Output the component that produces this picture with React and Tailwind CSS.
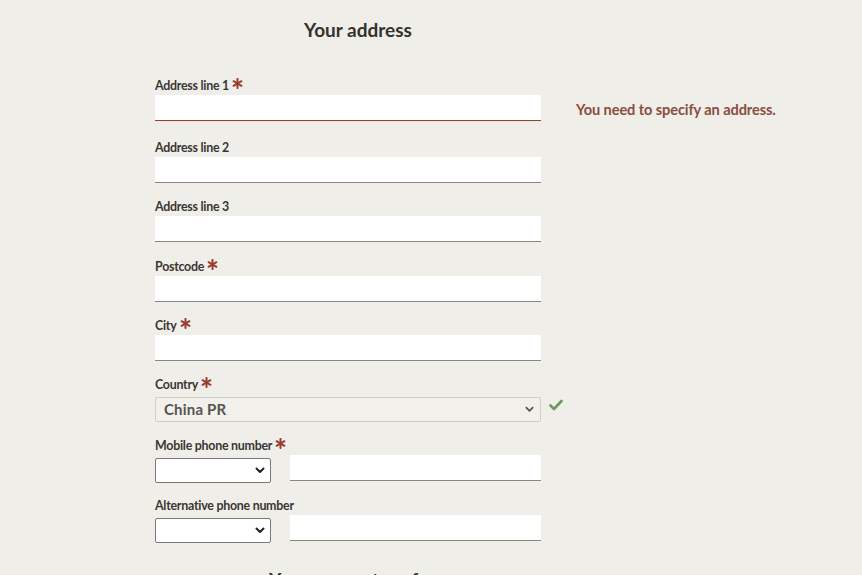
import React from "react";

const Star = () => (
  <svg width="11" height="11" viewBox="0 0 12 12" className="inline-block ml-[3px] -mt-[6px] align-middle">
    <g stroke="#9a3c30" strokeWidth="2.2" strokeLinecap="round">
      <line x1="6" y1="1" x2="6" y2="11" />
      <line x1="1.7" y1="3.5" x2="10.3" y2="8.5" />
      <line x1="1.7" y1="8.5" x2="10.3" y2="3.5" />
    </g>
  </svg>
);

const Chevron = ({ color = "#333", w = 10 }) => (
  <svg width={w} height="7" viewBox="0 0 10 7">
    <path d="M1.5 1.5 L5 5 L8.5 1.5" fill="none" stroke={color} strokeWidth="2" strokeLinecap="round" strokeLinejoin="round" />
  </svg>
);

const Label = ({ children, req }) => (
  <div className="h-[20px] pt-[2px] flex items-center text-[12.4px] font-bold text-[#3a3633] tracking-[-0.25px]">
    <span>{children}</span>
    {req && <Star />}
  </div>
);

const TextInput = ({ error }) => (
  <div
    className={
      "w-[386px] h-[26px] bg-white border-b " +
      (error ? "border-[#8b4a3a] shadow-[0_1px_0_#f3e0d8]" : "border-[#8a8580]")
    }
  />
);

const PhoneRow = () => (
  <div className="flex items-start w-[386px]">
    <div className="mt-[3px] w-[116px] h-[25px] bg-white border border-[#777] rounded-[2px] flex items-center justify-end pr-[5px]">
      <Chevron color="#222" />
    </div>
    <div className="ml-[19px] w-[251px] h-[26px] bg-white border-b border-[#8a8580]" />
  </div>
);

export default function App() {
  return (
    <div
      className="w-full min-h-[575px] h-[575px] overflow-hidden bg-[#efeee8]"
      style={{ fontFamily: "Lato, 'Open Sans', sans-serif" }}
    >
      <div className="pt-[18px] pl-[304px]">
        <h1 className="text-[19px] leading-[24px] font-bold text-[#35312e]">Your address</h1>
      </div>
      <div className="pl-[155px] pt-[33px]">
        <Label req>Address line 1</Label>
        <div className="flex items-center">
          <TextInput error />
          <div className="ml-[35px] mt-[3px] text-[14.6px] font-bold text-[#8b4c42] tracking-[-0.1px]">
            You need to specify an address.
          </div>
        </div>

        <div className="mt-[16px]">
          <Label>Address line 2</Label>
          <TextInput />
        </div>

        <div className="mt-[13px]">
          <Label>Address line 3</Label>
          <TextInput />
        </div>

        <div className="mt-[14px]">
          <Label req>Postcode</Label>
          <TextInput />
        </div>

        <div className="mt-[13px]">
          <Label req>City</Label>
          <TextInput />
        </div>

        <div className="mt-[13px]">
          <Label req>Country</Label>
          <div className="mt-[3px] flex items-center">
            <div className="w-[386px] h-[25px] bg-[#f1f0eb] border border-[#cfcdc7] rounded-[2px] flex items-center justify-between pl-[8px] pr-[6px]">
              <span className="text-[15px] font-bold text-[#57534f] tracking-[0.2px]">China PR</span>
              <Chevron color="#555" w={9} />
            </div>
            <svg width="14" height="12" viewBox="0 0 14 12" className="ml-[8px] -mt-[10px]">
              <path d="M1.5 6.5 L5 10 L12.5 2" fill="none" stroke="#6a9a5c" strokeWidth="2.6" strokeLinecap="round" strokeLinejoin="round" />
            </svg>
          </div>
        </div>

        <div className="mt-[13px]">
          <Label req>Mobile phone number</Label>
          <PhoneRow />
        </div>

        <div className="mt-[12px]">
          <Label>Alternative phone number</Label>
          <PhoneRow />
        </div>
      </div>
      <div className="pl-[269px] pt-[25px]">
        <h2 className="text-[19px] leading-[24px] font-bold text-[#35312e]">Your account preferences</h2>
      </div>
    </div>
  );
}
